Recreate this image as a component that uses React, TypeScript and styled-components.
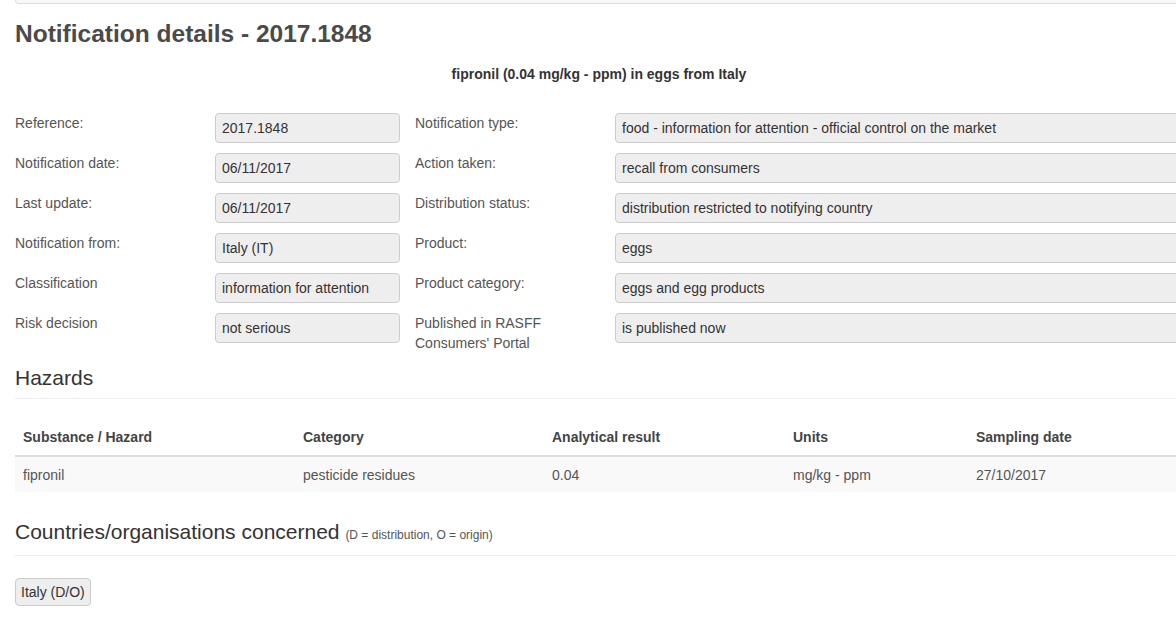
import React from 'react';
import styled, { createGlobalStyle } from 'styled-components';

const textColor = '#555';
const lineColor = '#eee';

const GlobalStyle = createGlobalStyle`
  html, body {
    margin: 0;
    padding: 0;
    background: #fff;
    overflow: hidden;
  }
  body {
    font-family: "Liberation Sans", Arial, sans-serif;
    font-size: 14px;
    line-height: 20px;
    color: ${textColor};
  }
`;

const Page = styled.div`
  width: 1168px;
  padding: 0 15px;
`;

const NavEdge = styled.div`
  height: 3px;
  margin-right: -40px;
  background: #f8f8f8;
  border: 1px solid #ddd;
  border-top: none;
  border-radius: 0 0 4px 4px;
`;

const Title = styled.h1`
  margin: 15px 0 0;
  font-size: 24.5px;
  line-height: 30px;
  font-weight: bold;
  color: #4a4a4a;
`;

const Subject = styled.p`
  margin: 15px 0 0;
  text-align: center;
  font-size: 14px;
  font-weight: bold;
  color: #333;
`;

const DetailGrid = styled.div`
  display: grid;
  grid-template-columns: 200px 185px 215px 1fr;
  row-gap: 10px;
  margin-top: 29px;
`;

const Label = styled.div<{ $inset?: boolean }>`
  line-height: 20px;
  padding-left: ${(p) => (p.$inset ? 15 : 0)}px;
  white-space: pre-line;
`;

const Value = styled.div`
  height: 30px;
  box-sizing: border-box;
  padding: 4px 6px 6px;
  background: #eee;
  border: 1px solid #ccc;
  border-radius: 4px;
  color: #333;
  white-space: nowrap;
`;

const SectionTitle = styled.h4<{ $top: number }>`
  margin: ${(p) => p.$top}px 0 0;
  padding-bottom: 9px;
  border-bottom: 1px solid ${lineColor};
  font-size: 21px;
  line-height: 22px;
  font-weight: normal;
  color: #333;
`;

const Note = styled.small`
  font-size: 12px;
  color: #555;
`;

const Table = styled.table`
  width: 100%;
  margin-top: 20px;
  border-collapse: collapse;
  table-layout: fixed;
  th, td {
    padding: 8px;
    text-align: left;
    line-height: 20px;
  }
  th {
    font-weight: bold;
    color: #444;
    border-bottom: 2px solid #ddd;
  }
  td {
    padding-bottom: 7px;
  }
  tbody tr {
    background: #f9f9f9;
  }
`;

const CountryButton = styled.button`
  height: 28px;
  box-sizing: border-box;
  margin-top: 22px;
  padding: 0 5px;
  font-family: inherit;
  font-size: 14px;
  line-height: 20px;
  color: #333;
  background: #eee;
  border: 1px solid #ccc;
  border-radius: 4px;
`;

const details: [string, string, string, string][] = [
  ['Reference:', '2017.1848', 'Notification type:', 'food - information for attention - official control on the market'],
  ['Notification date:', '06/11/2017', 'Action taken:', 'recall from consumers'],
  ['Last update:', '06/11/2017', 'Distribution status:', 'distribution restricted to notifying country'],
  ['Notification from:', 'Italy (IT)', 'Product:', 'eggs'],
  ['Classification', 'information for attention', 'Product category:', 'eggs and egg products'],
  ['Risk decision', 'not serious', "Published in RASFF\nConsumers' Portal", 'is published now'],
];

const columns = [
  { name: 'Substance / Hazard', width: 280 },
  { name: 'Category', width: 249 },
  { name: 'Analytical result', width: 241 },
  { name: 'Units', width: 183 },
  { name: 'Sampling date', width: 215 },
];

const hazard = ['fipronil', 'pesticide residues', '0.04', 'mg/kg - ppm', '27/10/2017'];

export default function App() {
  return (
    <Page>
      <GlobalStyle />
      <NavEdge />
      <Title>Notification details - 2017.1848</Title>
      <Subject>fipronil (0.04 mg/kg - ppm) in eggs from Italy</Subject>
      <DetailGrid>
        {details.map(([l1, v1, l2, v2]) => (
          <React.Fragment key={l1}>
            <Label>{l1}</Label>
            <Value>{v1}</Value>
            <Label $inset>{l2}</Label>
            <Value>{v2}</Value>
          </React.Fragment>
        ))}
      </DetailGrid>
      <SectionTitle $top={14}>Hazards</SectionTitle>
      <Table>
        <colgroup>
          {columns.map((c) => <col key={c.name} style={{ width: c.width }} />)}
        </colgroup>
        <thead>
          <tr>{columns.map((c) => <th key={c.name}>{c.name}</th>)}</tr>
        </thead>
        <tbody>
          <tr>{hazard.map((h) => <td key={h}>{h}</td>)}</tr>
        </tbody>
      </Table>
      <SectionTitle $top={29}>
        Countries/organisations concerned <Note>(D = distribution, O = origin)</Note>
      </SectionTitle>
      <CountryButton>Italy (D/O)</CountryButton>
    </Page>
  );
}
